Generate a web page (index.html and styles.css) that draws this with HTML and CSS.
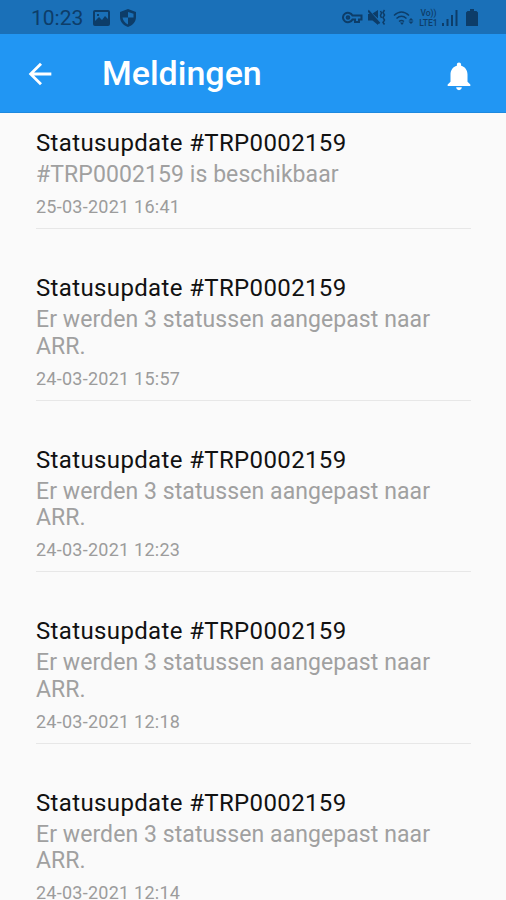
FILE: index.html
```html
<!DOCTYPE html>
<html lang="nl">
<head>
  <meta charset="UTF-8">
  <meta name="viewport" content="width=device-width, initial-scale=1.0">
  <title>Meldingen</title>
  <link rel="stylesheet" href="styles.css">
</head>
<body>

  <div class="status-bar">
    <span class="clock">10:23</span>
    <svg class="icon-image" width="17" height="16" viewBox="0 0 17 16">
      <path fill-rule="evenodd" d="M2 0h13a2 2 0 0 1 2 2v12a2 2 0 0 1-2 2H2a2 2 0 0 1-2-2V2a2 2 0 0 1 2-2zM2 2v9l4-4 3 3 3-4 3 3V2zM4 4h2v2H4z"/>
    </svg>
    <svg class="icon-shield" width="16" height="18" viewBox="0 0 16 18">
      <path fill-rule="evenodd" d="M8 0l8 3v5c0 5-3.500 8.500-8 10C3.500 16.500 0 13 0 8V3zM8 3v5.500h5.500V4.800zM8 8.500H2.500C3 11.500 5 14 8 15.500z"/>
    </svg>
    <div class="status-icons">
      <svg width="21" height="13" viewBox="0 0 21 13" fill="none" stroke="currentColor" stroke-width="2">
        <path d="M10.500 4.500A5 4.700 0 1 0 10.500 8.500H13V11H17V8.500H19.500V4.500z"/>
        <circle cx="6" cy="6.500" r="1.300"/>
      </svg>
      <svg class="icon-mute" width="18" height="17" viewBox="0 0 18 17">
        <path d="M4.500 4.500L10 1v8.500zM0 5h2.500L10 13v3l-5.500-4.500H0z"/>
        <path d="M0 1.500l11.500 13" fill="none" stroke="currentColor" stroke-width="2"/>
        <path d="M12.500 2l1 2-1 2.500 1 2.500M16.500 1l-1.500 2.500 1.500 2.500-1.500 2.500 1.500 2.500-1.500 2.500 1.500 2" fill="none" stroke="currentColor" stroke-width="1.500"/>
      </svg>
      <svg class="icon-wifi" width="21" height="16" viewBox="0 0 21 16">
        <path d="M1 5.500Q8.500-1.500 16 5.500M3.500 8.500Q8.500 4 13.500 8.500M6 11.500Q8.500 9.500 11 11.500" fill="none" stroke="currentColor" stroke-width="1.500"/>
        <path d="M7 12.500h4L9 15zM15.500 10.500L18 8l2.500 2.500zM15.500 11.500H20.500L18 14z"/>
      </svg>
      <span class="network"><span>Vo))</span><span>LTE1</span></span>
      <svg class="icon-signal" width="16" height="16" viewBox="0 0 16 16">
        <path d="M0 13h2v3H0zM4.500 9h2v7h-2zM9 5h2v11H9zM13.500 0h2v16h-2z"/>
      </svg>
      <svg class="icon-battery" width="12" height="17" viewBox="0 0 12 17">
        <path d="M4 0h4v2h2.500L12 3.500V17H0V3.500L1.500 2H4z"/>
      </svg>
    </div>
  </div>

  <header class="app-bar">
    <svg class="back" width="34" height="34" viewBox="0 0 24 24">
      <path d="M20 11H7.830l5.590-5.590L12 4l-8 8 8 8 1.410-1.410L7.830 13H20v-2z"/>
    </svg>
    <h1>Meldingen</h1>
    <svg class="bell" width="34" height="34" viewBox="0 0 24 24">
      <path d="M12 22c1.100 0 2-.9 2-2h-4c0 1.100.89 2 2 2zm6-6v-5c0-3.070-1.640-5.640-4.500-6.320V4c0-.83-.67-1.500-1.500-1.500s-1.500.67-1.500 1.500v.68C7.630 5.360 6 7.920 6 11v5l-2 2v1h16v-1l-2-2z"/>
    </svg>
  </header>

  <main class="messages">
    <article class="message">
      <h2>Statusupdate #TRP0002159</h2>
      <p>#TRP0002159 is beschikbaar</p>
      <time>25-03-2021 16:41</time>
    </article>
    <article class="message">
      <h2>Statusupdate #TRP0002159</h2>
      <p>Er werden 3 statussen aangepast naar ARR.</p>
      <time>24-03-2021 15:57</time>
    </article>
    <article class="message">
      <h2>Statusupdate #TRP0002159</h2>
      <p>Er werden 3 statussen aangepast naar ARR.</p>
      <time>24-03-2021 12:23</time>
    </article>
    <article class="message">
      <h2>Statusupdate #TRP0002159</h2>
      <p>Er werden 3 statussen aangepast naar ARR.</p>
      <time>24-03-2021 12:18</time>
    </article>
    <article class="message">
      <h2>Statusupdate #TRP0002159</h2>
      <p>Er werden 3 statussen aangepast naar ARR.</p>
      <time>24-03-2021 12:14</time>
    </article>
  </main>

</body>
</html>
```
FILE: styles.css
```css
* {
  box-sizing: border-box;
}
body {
  margin: 0;
  height: 100vh;
  overflow: hidden;
  background: #fafafa;
  font-family: Roboto, sans-serif;
}
svg {
  display: block;
  flex-shrink: 0;
  fill: currentColor;
}
svg[fill="none"] {
  fill: none;
}
.status-bar {
  display: flex;
  align-items: center;
  height: 34px;
  padding: 1px 28px 0 31px;
  background: #1a70b8;
  color: #0d3d69;
}
.clock {
  width: 53px;
  font-size: 21px;
  line-height: 24px;
}
.icon-image {
  margin-left: 9px;
}
.icon-shield {
  margin-left: 10px;
}
.status-icons {
  display: flex;
  align-items: center;
  margin-left: auto;
}
.icon-mute {
  margin-left: 5px;
}
.icon-wifi {
  margin-left: 7px;
}
.network {
  display: flex;
  flex-direction: column;
  align-items: center;
  width: 23px;
  margin-left: 3px;
  font-size: 8.5px;
  font-weight: 500;
  line-height: 10px;
}
.icon-signal {
  margin-left: 2px;
}
.icon-battery {
  margin-left: 8px;
}
.app-bar {
  display: flex;
  align-items: center;
  height: 79px;
  padding: 0 30px 0 23px;
  background: #2196f3;
  border-bottom: 1px solid #1d89df;
  color: #fff;
}
.app-bar h1 {
  margin: 0 auto 0 45px;
  font-size: 34px;
  font-weight: 500;
  line-height: 40px;
}
.back {
  margin-top: 1px;
}
.bell {
  margin-top: 6px;
}
.messages {
  padding: 17.4px 35px 0 36px;
}
.message {
  margin-bottom: 46px;
  padding-bottom: 11px;
  border-bottom: 1px solid #e7e7e7;
}
.message h2 {
  margin: 0 0 5.7px;
  color: #111;
  font-size: 24px;
  font-weight: 400;
  letter-spacing: 0.36px;
  line-height: 26.4px;
}
.message p {
  margin: 0 0 7.2px;
  color: #a0a0a0;
  font-size: 23px;
  letter-spacing: 0.08px;
  line-height: 26.6px;
}
.message time {
  display: block;
  color: #9c9c9c;
  font-size: 18px;
  letter-spacing: 0.25px;
  line-height: 21px;
}
```
